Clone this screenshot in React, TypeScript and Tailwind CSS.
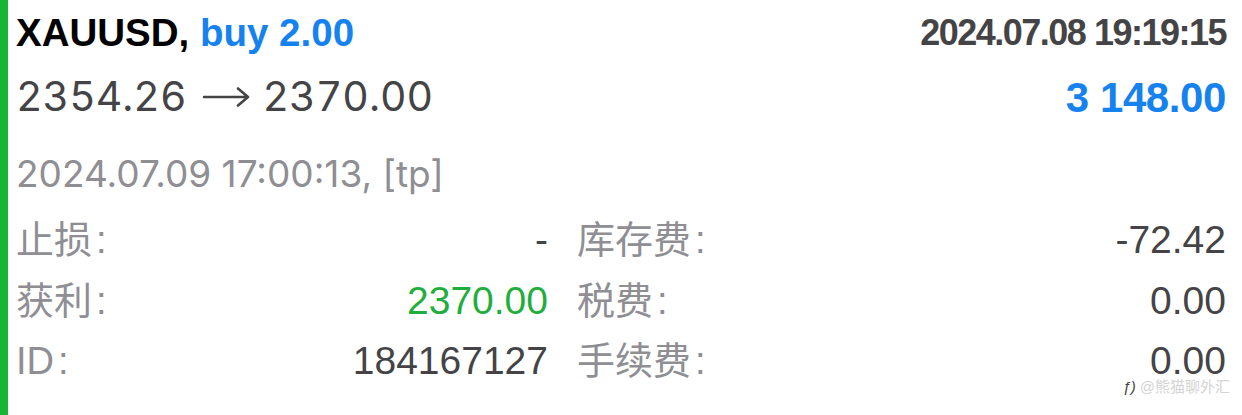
export default function App() {
  const rows = [
    { l: "止损", v: "-", vc: "text-[#444446]", r: "库存费", rv: "-72.42" },
    { l: "获利", v: "2370.00", vc: "text-[#1fae3c]", r: "税费", rv: "0.00" },
    { l: "ID", v: "184167127", vc: "text-[#444446]", r: "手续费", rv: "0.00" },
  ];
  const Label = ({ t }: { t: string }) => (
    <span className="text-[38px] leading-[48px] text-[#8e8e93]">
      {t}
      <span className="ml-[4px]">:</span>
    </span>
  );
  return (
    <div className="relative flex h-[415px] w-[1242px] bg-white font-['Liberation_Sans','Noto_Sans_CJK_SC',sans-serif]">
      <div className="w-[8px] shrink-0 bg-[#18b436]" />
      <div className="flex flex-1 flex-col pl-[8px] pr-[16px]">
        <div className="flex h-[66px] items-center justify-between">
          <div className="text-[38.5px] font-bold text-black">
            XAUUSD, <span className="text-[#1582f0]">buy 2.00</span>
          </div>
          <div className="text-[36px] font-bold tracking-[-1.5px] text-[#444446]">2024.07.08 19:19:15</div>
        </div>
        <div className="flex h-[62px] items-center justify-between">
          <div className="flex items-center font-['Inter',sans-serif] text-[41px] tabular-nums text-[#444446]">
            <span>2354.26</span>
            <svg className="ml-[16px] mr-[13px]" width="47" height="22" viewBox="0 0 47 22" fill="none">
              <path d="M1 11H45M35 2.5L45 11L35 19.5" stroke="#444446" strokeWidth="2.6" strokeLinecap="round" strokeLinejoin="round" />
            </svg>
            <span>2370.00</span>
          </div>
          <div className="text-[42px] font-bold tracking-[-0.4px] text-[#1582f0]">3 148.00</div>
        </div>
        <div className="mt-[16px] flex h-[60px] items-center font-['Inter',sans-serif] text-[37px] text-[#8e8e93]">
          2024.07.09 17:00:13, [tp]
        </div>
        <div className="mt-[6px] flex flex-col">
          {rows.map((r) => (
            <div key={r.l} className="grid h-[60.5px] grid-cols-[532px_1fr] items-center gap-[29px] text-[39px]">
              <div className="flex items-center justify-between">
                <Label t={r.l} />
                <span className={r.vc}>{r.v}</span>
              </div>
              <div className="flex items-center justify-between">
                <Label t={r.r} />
                <span className="text-[#444446]">{r.rv}</span>
              </div>
            </div>
          ))}
        </div>
      </div>
      <div className="absolute right-[12px] top-[376px] flex items-center gap-[4px] text-[15px] text-[#d4d4d4]">
        <span className="italic text-[#444]">ƒ)</span>
        <span>@熊猫聊外汇</span>
      </div>
    </div>
  );
}
